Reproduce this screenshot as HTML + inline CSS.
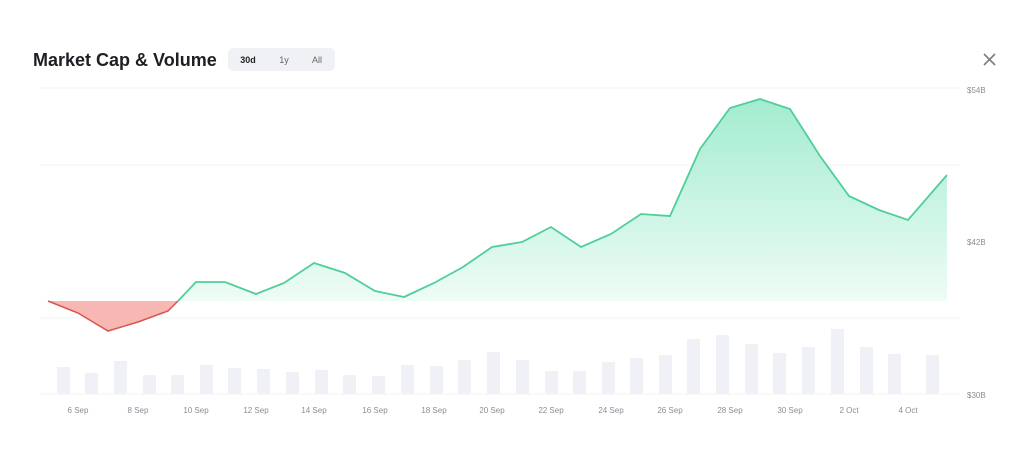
<!DOCTYPE html>
<html><head><meta charset="utf-8"><style>
html,body{margin:0;padding:0;background:#fff;width:1024px;height:461px;overflow:hidden;font-family:"Liberation Sans",sans-serif}
</style></head><body>
<svg width="1024" height="461" viewBox="0 0 1024 461" xmlns="http://www.w3.org/2000/svg" font-family="Liberation Sans, sans-serif">
<defs>
<linearGradient id="g" x1="0" y1="99" x2="0" y2="301" gradientUnits="userSpaceOnUse">
<stop offset="0" stop-color="#a3ecd0"/><stop offset="1" stop-color="#eefcf6"/></linearGradient>
</defs>
<text x="33" y="66" font-size="18" font-weight="bold" fill="#1e1f24">Market Cap &amp; Volume</text>
<rect x="228" y="48" width="107" height="23" rx="5" fill="#eff1f5"/>
<rect x="231" y="51" width="34" height="17" rx="4" fill="#eff1f5"/>
<text x="248" y="63" font-size="9" font-weight="bold" fill="#222" text-anchor="middle">30d</text>
<text x="284" y="63" font-size="9" fill="#666" text-anchor="middle">1y</text>
<text x="317" y="63" font-size="9" fill="#666" text-anchor="middle">All</text>
<path d="M984 54l11 11M995 54l-11 11" stroke="#7a7d85" stroke-width="1.6"/>
<g stroke="#f2f3f5" stroke-width="1"><line x1="40" y1="88" x2="960" y2="88"/><line x1="40" y1="165" x2="960" y2="165"/><line x1="40" y1="318" x2="960" y2="318"/><line x1="40" y1="394" x2="960" y2="394"/></g>
<path d="M178 301 196 282 225 282 256 294 284 283 314 263 345 273 375 291 404 297 434 283 463 267 492 247 522 242 551 227 581 247 611 234 641 214 670 216 700 149 730 108 760 99 790 109 820 156 849 196 879 210 908 220 947 175 947 301Z" fill="url(#g)"/>
<path d="M48 301 78 313 108 331 138 322 168 311 178 301Z" fill="#f7b8b4"/>
<path d="M48 301 78 313 108 331 138 322 168 311 178 301" fill="none" stroke="#d9534f" stroke-width="1.5"/>
<path d="M178 301 196 282 225 282 256 294 284 283 314 263 345 273 375 291 404 297 434 283 463 267 492 247 522 242 551 227 581 247 611 234 641 214 670 216 700 149 730 108 760 99 790 109 820 156 849 196 879 210 908 220 947 175" fill="none" stroke="#4fcf99" stroke-width="1.8"/>
<g fill="#eff1f6">
<rect x="57" y="367" width="13" height="27"/><rect x="85" y="373" width="13" height="21"/><rect x="114" y="361" width="13" height="33"/><rect x="143" y="375" width="13" height="19"/><rect x="171" y="375" width="13" height="19"/><rect x="200" y="365" width="13" height="29"/><rect x="228" y="368" width="13" height="26"/><rect x="257" y="369" width="13" height="25"/><rect x="286" y="372" width="13" height="22"/><rect x="315" y="370" width="13" height="24"/><rect x="343" y="375" width="13" height="19"/><rect x="372" y="376" width="13" height="18"/><rect x="401" y="365" width="13" height="29"/><rect x="430" y="366" width="13" height="28"/><rect x="458" y="360" width="13" height="34"/><rect x="487" y="352" width="13" height="42"/><rect x="516" y="360" width="13" height="34"/><rect x="545" y="371" width="13" height="23"/><rect x="573" y="371" width="13" height="23"/><rect x="602" y="362" width="13" height="32"/><rect x="630" y="358" width="13" height="36"/><rect x="659" y="355" width="13" height="39"/><rect x="687" y="339" width="13" height="55"/><rect x="716" y="335" width="13" height="59"/><rect x="745" y="344" width="13" height="50"/><rect x="773" y="353" width="13" height="41"/><rect x="802" y="347" width="13" height="47"/><rect x="831" y="329" width="13" height="65"/><rect x="860" y="347" width="13" height="47"/><rect x="888" y="354" width="13" height="40"/><rect x="926" y="355" width="13" height="39"/>
</g>
<g font-size="8" fill="#8a8d96" text-anchor="middle">
<text x="78" y="413">6 Sep</text><text x="138" y="413">8 Sep</text><text x="196" y="413">10 Sep</text><text x="256" y="413">12 Sep</text><text x="314" y="413">14 Sep</text><text x="375" y="413">16 Sep</text><text x="434" y="413">18 Sep</text><text x="492" y="413">20 Sep</text><text x="551" y="413">22 Sep</text><text x="611" y="413">24 Sep</text><text x="670" y="413">26 Sep</text><text x="730" y="413">28 Sep</text><text x="790" y="413">30 Sep</text><text x="849" y="413">2 Oct</text><text x="908" y="413">4 Oct</text>
</g>
<g font-size="8" fill="#8a8d96">
<text x="967" y="93">$54B</text><text x="967" y="245">$42B</text><text x="967" y="398">$30B</text>
</g>
</svg>
</body></html>
